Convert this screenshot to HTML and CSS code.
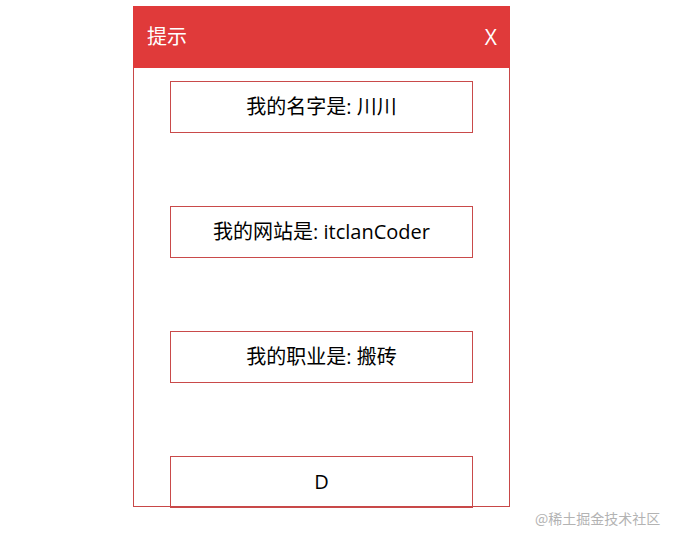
FILE: index.html
```html
<!DOCTYPE html>
<html lang="zh">
<head>
<meta charset="utf-8">
<title>提示</title>
<link rel="stylesheet" href="styles.css">
</head>
<body>
<div class="page">
  <div class="dialog">
    <div class="dialog-header">
      <span class="dialog-title">提示</span>
      <span class="dialog-close">X</span>
    </div>
    <div class="dialog-body">
      <div class="item">我的名字是: 川川</div>
      <div class="item">我的网站是: itclanCoder</div>
      <div class="item">我的职业是: 搬砖</div>
      <div class="item">D</div>
    </div>
  </div>
</div>
<div class="watermark">@稀土掘金技术社区</div>
</body>
</html>
```

FILE: styles.css
```css
html, body {
  margin: 0;
  padding: 0;
  background: #ffffff;
}

body {
  width: 679px;
  height: 543px;
  position: relative;
  overflow: hidden;
  font-family: "Open Sans", "Noto Sans CJK SC", sans-serif;
  color: #000000;
}

.page {
  padding: 6px 0 0 133px;
}

.dialog {
  box-sizing: border-box;
  width: 377px;
  height: 501px;
  border: 1px solid #c84848;
  border-top: none;
  background: #ffffff;
}

.dialog-header {
  box-sizing: border-box;
  height: 62px;
  margin: 0 -1px;
  padding: 0 13px 0 14px;
  background: #e03a3a;
  color: #ffffff;
  display: flex;
  align-items: center;
  justify-content: space-between;
  font-size: 20px;
}

.dialog-title {
  font-family: "Noto Sans CJK SC", sans-serif;
  line-height: 1;
  position: relative;
  top: -1px;
}

.dialog-close {
  line-height: 1;
  font-size: 21px;
}

.dialog-body {
  display: flex;
  flex-direction: column;
  align-items: center;
  gap: 73px;
  padding-top: 13px;
}

.item {
  box-sizing: border-box;
  width: 303px;
  height: 52px;
  flex: none;
  border: 1px solid #c94a4a;
  display: flex;
  align-items: center;
  justify-content: center;
  font-size: 20px;
  line-height: 1;
}

.watermark {
  position: absolute;
  left: 535px;
  top: 509px;
  font-family: "Noto Sans CJK SC", sans-serif;
  font-size: 14px;
  line-height: 18px;
  color: #b3b3b3;
}
```
